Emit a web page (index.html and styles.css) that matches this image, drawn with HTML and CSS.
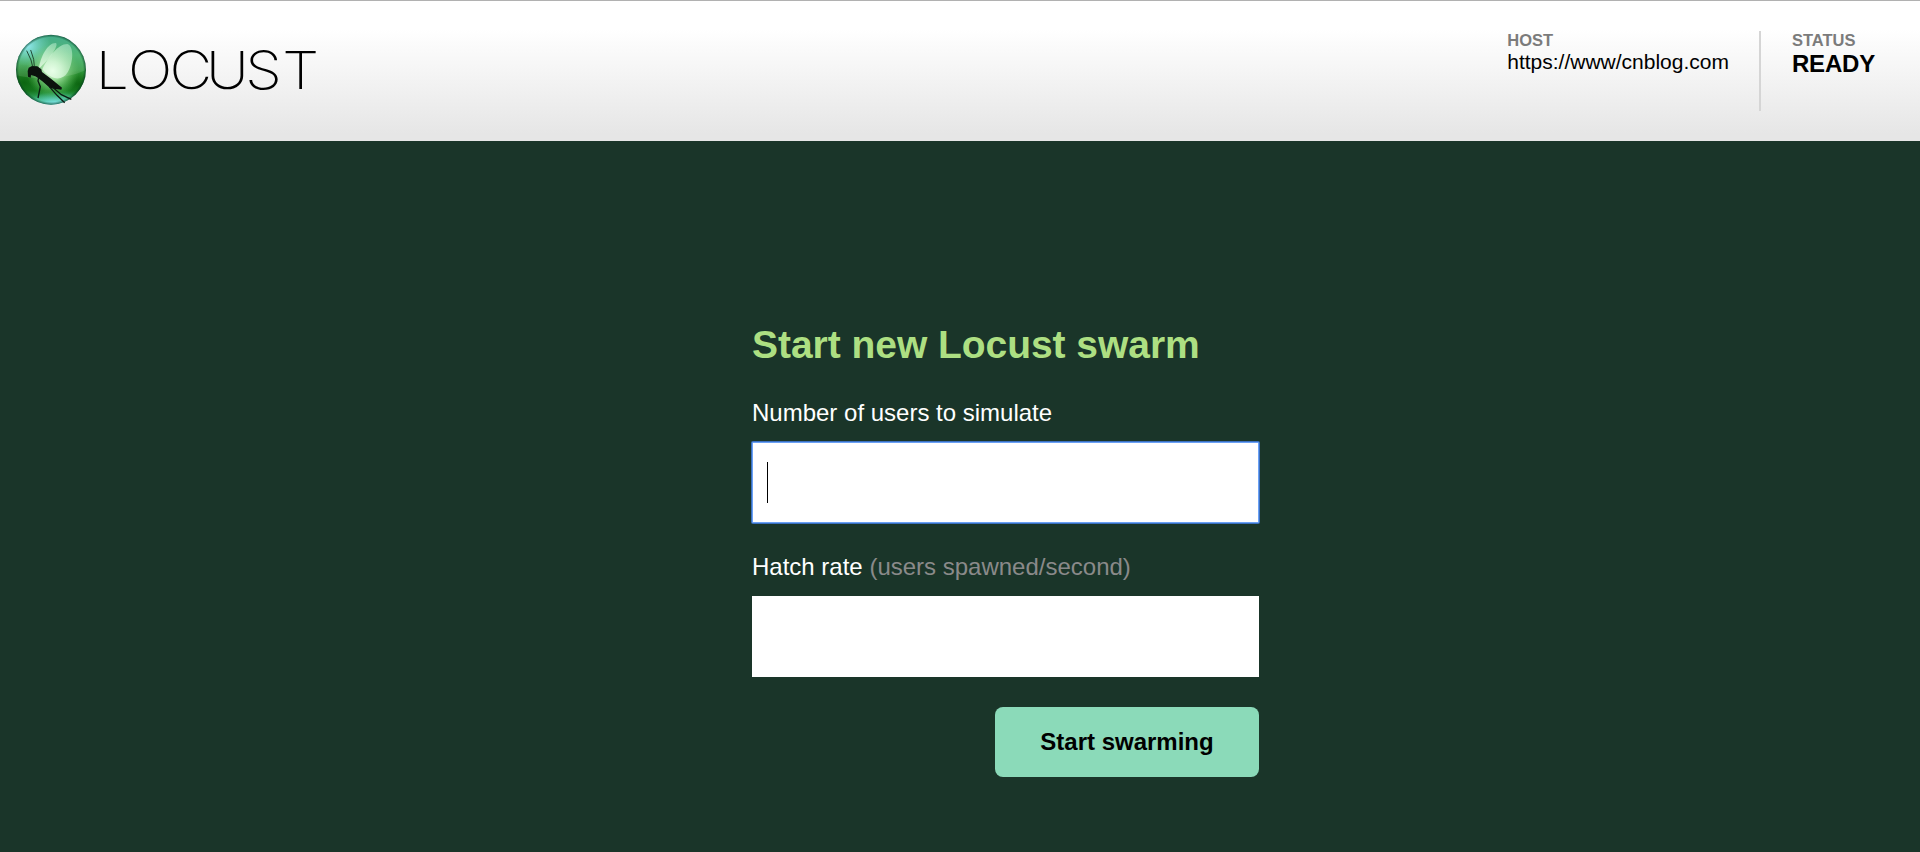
FILE: index.html
```html
<!DOCTYPE html>
<html lang="en">
<head>
<meta charset="utf-8">
<title>Locust</title>
<link rel="stylesheet" href="styles.css">
</head>
<body>
<header class="top">
  <svg class="logo" viewBox="0 0 330 100" role="img" aria-label="Locust">
    <defs>
      <linearGradient id="orb" x1="0" y1="0" x2="0" y2="1">
        <stop offset="0" stop-color="#2ba27c"/>
        <stop offset=".3" stop-color="#39ad62"/>
        <stop offset=".6" stop-color="#2c9330"/>
        <stop offset=".8" stop-color="#1d8428"/>
        <stop offset="1" stop-color="#49c99d"/>
      </linearGradient>
      <radialGradient id="glow">
        <stop offset="0" stop-color="#e2ffe0"/>
        <stop offset=".35" stop-color="#b0e9ae" stop-opacity=".85"/>
        <stop offset="1" stop-color="#58bd58" stop-opacity="0"/>
      </radialGradient>
      <radialGradient id="sky">
        <stop offset="0" stop-color="#83e7ee"/>
        <stop offset="1" stop-color="#62cfc5" stop-opacity="0"/>
      </radialGradient>
      <radialGradient id="shade">
        <stop offset="0" stop-color="#045808" stop-opacity=".75"/>
        <stop offset="1" stop-color="#045808" stop-opacity="0"/>
      </radialGradient>
      <radialGradient id="rim">
        <stop offset=".92" stop-color="#063e20" stop-opacity="0"/>
        <stop offset="1" stop-color="#063e28" stop-opacity=".7"/>
      </radialGradient>
      <linearGradient id="wing" x1="1" y1="0" x2="0" y2="1">
        <stop offset="0" stop-color="#d9ffe4" stop-opacity=".4"/>
        <stop offset="1" stop-color="#f0ffee" stop-opacity=".75"/>
      </linearGradient>
      <clipPath id="disc"><circle cx="153" cy="149" r="105"/></clipPath>
    </defs>
    <g transform="scale(.33333)">
      <g clip-path="url(#disc)">
        <circle cx="153" cy="149" r="105" fill="url(#orb)"/>
        <ellipse cx="72" cy="188" rx="72" ry="56" fill="url(#shade)"/>
        <ellipse cx="238" cy="192" rx="52" ry="42" fill="url(#shade)"/>
        <ellipse cx="82" cy="78" rx="72" ry="60" fill="url(#sky)"/>
        <ellipse cx="165" cy="252" rx="85" ry="36" fill="url(#sky)"/>
        <circle cx="158" cy="152" r="80" fill="url(#glow)"/>
        <path d="M45 164C90 178 190 184 262 148V40H45Z" fill="#fff" opacity=".12"/>
      </g>
      <circle cx="153" cy="149" r="105" fill="url(#rim)"/>
      <path d="M117 145C121 108 145 67 168 69C177 77 148 119 117 145Z" fill="url(#wing)"/>
      <path d="M127 148C144 112 174 72 202 72C222 77 221 128 203 157C187 184 154 181 127 148Z" fill="url(#wing)"/>
      <path d="M83 153L86 143L96 138L112 139L124 148L126 156L153 176L186 203L184 209L166 207L150 204L127 184L114 174L106 169L93 165L92 173L84 170Z" fill="#0b120d"/>
      <path d="M98 140L93 120L80 92M103 139L101 118L92 90" fill="none" stroke="#12301d" stroke-width="2.5"/>
      <path d="M116 172L114 183L121 200L114 234M148 200L171 226L194 248M157 201L184 224L214 238" fill="none" stroke="#0b1a12" stroke-width="4"/>
    </g>
    <text class="wordmark" transform="scale(1.12 1)" x="85.500 114.200 151.300 184 219 252" y="69">LOCUST</text>
  </svg>
  <div class="boxes">
    <div class="box">
      <div class="label">HOST</div>
      <div class="host">https://www/cnblog.com</div>
    </div>
    <div class="box box-status">
      <div class="label">STATUS</div>
      <div class="status">READY</div>
    </div>
  </div>
</header>
<main class="start">
  <h2 class="title">Start new Locust swarm</h2>
  <form class="form">
    <label class="caption" for="users">Number of users to simulate</label>
    <div class="field field-focused"><span class="caret"></span><input class="input" id="users" type="text"></div>
    <label class="caption" for="rate">Hatch rate <span class="hint">(users spawned/second)</span></label>
    <div class="field"><input class="input" id="rate" type="text"></div>
    <button class="submit" type="button">Start swarming</button>
  </form>
</main>
</body>
</html>
```
FILE: styles.css
```css
* { box-sizing: border-box; }

body {
  margin: 0;
  min-height: 852px;
  background: #1a3529;
  color: #fff;
  font-family: Arial, "Liberation Sans", sans-serif;
}

.top {
  display: flex;
  justify-content: space-between;
  align-items: flex-start;
  height: 141px;
  border-top: 1px solid #b1b1b1;
  background: linear-gradient(#fff 0%, #fff 20%, #e6e6e6 95%);
  color: #000;
}

.logo {
  width: 330px;
  height: 100px;
  margin-top: 19px;
}

.wordmark {
  font-family: Inter, sans-serif;
  font-size: 52.5px;
  font-weight: 200;
  fill: #000;
}

.boxes {
  display: flex;
  padding: 30px 45px 0 0;
}

.box {
  height: 80px;
  padding-right: 30px;
}

.box-status {
  padding: 0 0 0 31px;
  border-left: 2px solid #d5d5d5;
}

.label {
  color: #7b7b7b;
  font-size: 16.5px;
  font-weight: 700;
  line-height: 19px;
}

.host {
  font-size: 21px;
  line-height: 24px;
}

.status {
  font-size: 24px;
  font-weight: 700;
  line-height: 28px;
  letter-spacing: -0.2px;
}

.start {
  width: 507px;
  margin-left: 752px;
  padding-top: 181px;
}

.title {
  margin: 0 0 32px;
  color: #addf82;
  font-size: 39px;
  line-height: 45px;
  letter-spacing: -0.04px;
}

.form {
  display: flex;
  flex-direction: column;
}

.caption {
  margin-bottom: 15px;
  font-size: 24px;
  line-height: 28px;
}

.hint { color: #8a8a8a; }

.field {
  display: flex;
  align-items: center;
  height: 81px;
  margin-bottom: 30px;
  padding: 0 15px;
  background: #fff;
}

.field-focused {
  padding: 0 14px;
  border: 1px solid #6ba1f5;
  border-radius: 1px;
  box-shadow: 0 0 0 1px #3a70c0;
}

.caret {
  width: 1px;
  height: 41px;
  background: #000;
}

.input {
  flex: 1;
  min-width: 0;
  height: 41px;
  padding: 0;
  border: 0;
  outline: 0;
  background: transparent;
  font: 36px Arial, "Liberation Sans", sans-serif;
}

.submit {
  align-self: flex-end;
  width: 264px;
  height: 70px;
  padding: 0;
  border: 0;
  border-radius: 8px;
  background: #8bdab9;
  color: #000;
  font: 700 24px Arial, "Liberation Sans", sans-serif;
}
```
